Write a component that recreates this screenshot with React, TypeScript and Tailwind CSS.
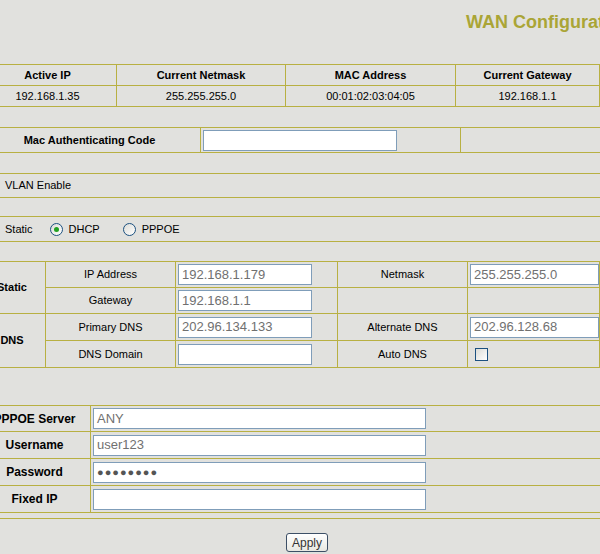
const line = "border-[#b8b042]";

function Field({ value, width, password }: { value: string; width: string; password?: boolean }) {
  return (
    <div
      className={`${width} h-[21px] bg-white border border-[#7f9db9] flex items-center px-[3px] text-[13px] text-[#707070] whitespace-nowrap overflow-hidden`}
    >
      {password ? <span className="text-[#555] text-[11px] tracking-[1px]">●●●●●●●●</span> : value}
    </div>
  );
}

function Radio({ checked }: { checked?: boolean }) {
  return (
    <span className="w-[13px] h-[13px] rounded-full border border-[#1c5180] bg-gradient-to-br from-[#dcdcd7] to-white flex items-center justify-center shrink-0">
      {checked && <span className="w-[5px] h-[5px] rounded-full bg-[#21a121]" />}
    </span>
  );
}

function Check() {
  return <span className="w-[13px] h-[13px] border border-[#1c5180] bg-gradient-to-br from-[#dcdcd7] to-white block shrink-0" />;
}

export default function App() {
  const cell = `border-r border-b ${line} flex items-center justify-center`;
  return (
    <div className="w-[600px] h-[554px] overflow-hidden bg-[#e1e1de] text-[11px] text-black font-['Liberation_Sans',Arial,sans-serif]">
      <div className="ml-[-21px] w-[621px]">
        <div className="h-[64px] pl-[487px] pt-[9px] whitespace-nowrap">
          <span className="text-[18px] font-bold text-[#aaa536]">WAN Configuration</span>
        </div>

        <div className={`grid grid-cols-[138px_169px_170px_144px] border-t ${line}`}>
          {["Active IP", "Current Netmask", "MAC Address", "Current Gateway"].map((h) => (
            <div key={h} className={`${cell} h-[21px] font-bold`}>{h}</div>
          ))}
          {["192.168.1.35", "255.255.255.0", "00:01:02:03:04:05", "192.168.1.1"].map((v) => (
            <div key={v} className={`${cell} h-[21px]`}>{v}</div>
          ))}
        </div>

        <div className="h-[20px]" />
        <div className={`grid grid-cols-[222px_260px_139px] border-t ${line}`}>
          <div className={`${cell} h-[25px] font-bold`}>Mac Authenticating Code</div>
          <div className={`border-r border-b ${line} h-[25px] flex items-center pl-[2px]`}>
            <Field value="" width="w-[194px]" />
          </div>
          <div className={`border-b ${line} h-[25px]`} />
        </div>

        <div className="h-[20px]" />
        <div className={`border-t border-b ${line} h-[25px] flex items-center gap-[5px] pl-[8px]`}>
          <Check />
          <span>VLAN Enable</span>
        </div>

        <div className="h-[18px]" />
        <div className={`border-t border-b ${line} h-[26px] flex items-center pl-[8px]`}>
          <Radio />
          <span className="ml-[5px] mr-[17px]">Static</span>
          <Radio checked />
          <span className="ml-[6px] mr-[23px]">DHCP</span>
          <Radio />
          <span className="ml-[6px]">PPPOE</span>
        </div>

        <div className="h-[19px]" />
        <div className={`grid grid-cols-[67px_130px_162px_130px_132px] grid-rows-[26px_26px_27px_27px] border-t ${line}`}>
          <div className={`${cell} row-span-2 font-bold`}>Static</div>
          <div className={cell}>IP Address</div>
          <div className={`${cell} justify-start pl-[2px]`}><Field value="192.168.1.179" width="w-[134px]" /></div>
          <div className={cell}>Netmask</div>
          <div className={`${cell} justify-start pl-[2px]`}><Field value="255.255.255.0" width="w-[134px]" /></div>
          <div className={cell}>Gateway</div>
          <div className={`${cell} justify-start pl-[2px]`}><Field value="192.168.1.1" width="w-[134px]" /></div>
          <div className={cell} />
          <div className={cell} />
          <div className={`${cell} row-span-2 font-bold`}>DNS</div>
          <div className={cell}>Primary DNS</div>
          <div className={`${cell} justify-start pl-[2px]`}><Field value="202.96.134.133" width="w-[134px]" /></div>
          <div className={cell}>Alternate DNS</div>
          <div className={`${cell} justify-start pl-[2px]`}><Field value="202.96.128.68" width="w-[134px]" /></div>
          <div className={cell}>DNS Domain</div>
          <div className={`${cell} justify-start pl-[2px]`}><Field value="" width="w-[134px]" /></div>
          <div className={cell}>Auto DNS</div>
          <div className={`${cell} justify-start pl-[7px]`}><Check /></div>
        </div>

        <div className="h-[37px]" />
        <div className={`grid grid-cols-[112px_509px] grid-rows-[26px_27px_27px_27px] border-t ${line}`}>
          {[
            ["PPPOE Server", "ANY"],
            ["Username", "user123"],
            ["Password", "pw"],
            ["Fixed IP", ""],
          ].map(([k, v]) => (
            <div key={k} className="contents">
              <div className={`${cell} text-[12px] font-bold`}>{k}</div>
              <div className={`border-b ${line} flex items-center pl-[2px]`}>
                <Field value={v} width="w-[333px]" password={k === "Password"} />
              </div>
            </div>
          ))}
        </div>

        <div className={`mt-[5px] border-t ${line}`} />
        <div className="pt-[14px] pl-[307px]">
          <button className="h-[19px] px-[5px] rounded-[3px] border border-[#3c4f66] bg-gradient-to-b from-white to-[#e8e8e2] text-[12px] text-[#333] leading-none">
            Apply
          </button>
        </div>
      </div>
    </div>
  );
}
